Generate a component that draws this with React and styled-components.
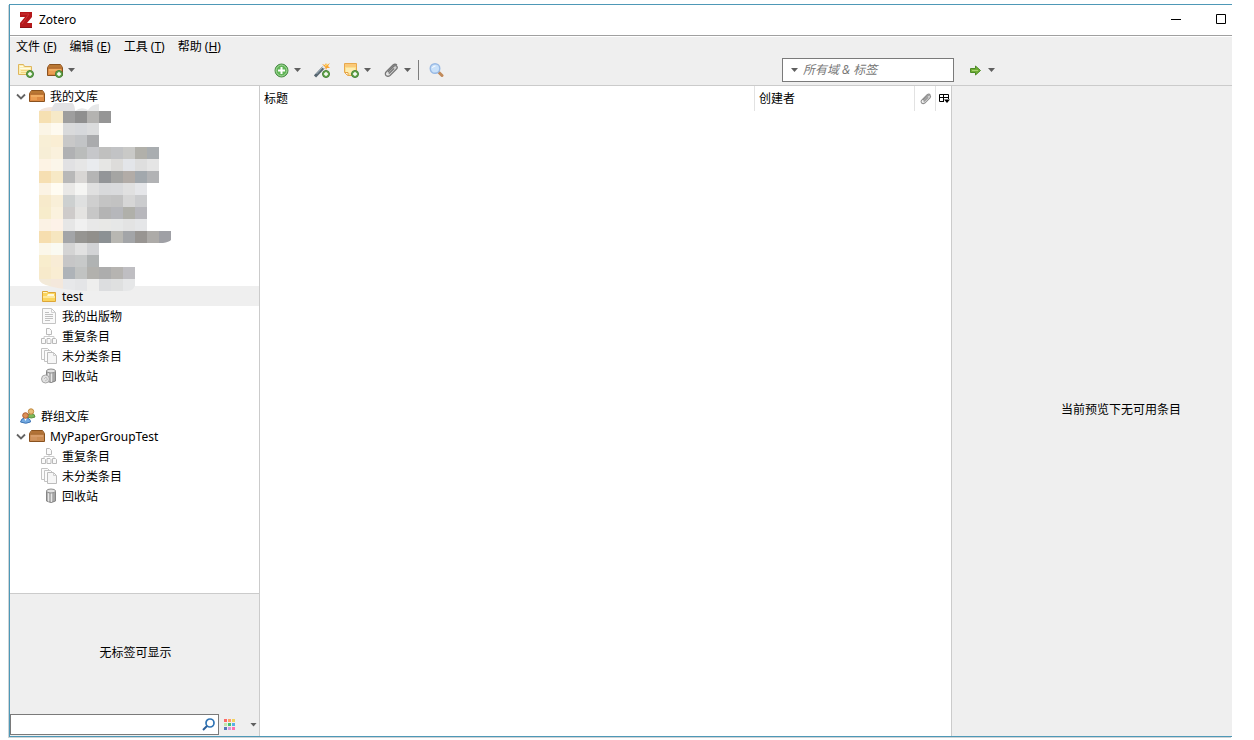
import React, { useState } from 'react';
import styled, { createGlobalStyle } from 'styled-components';


const GlobalStyle = createGlobalStyle`
  * {
    box-sizing: border-box;
  }
  body {
    margin: 0;
    background-color: white;
    color: black;
    font-family: "Noto Sans", "Noto Sans CJK SC", sans-serif;
    font-size: 12px;
    line-height: 20px;
  }
  button, input {
    font: inherit;
    color: inherit;
  }
  svg {
    display: block;
    flex-shrink: 0;
  }
`

const Page = styled.div`
  display: flex;
  min-height: 100vh;
  padding: 4px 22px 3px 9px;
`

const Window = styled.div`
  flex: 1;
  min-width: 0;
  display: flex;
  flex-direction: column;
  background-color: #efefef;
  border: 1px solid #4e98b7;
  border-right: none;
  box-shadow: -1px 1px 0 #cfd3d5;
`

const TitleBar = styled.header`
  display: flex;
  align-items: center;
  height: 31px;
  padding: 0 0 1px 10px;
  background-color: white;
  border-bottom: 1px solid #a0a0a0;
`

const AppTitle = styled.h1`
  flex: 1;
  margin: 0 0 0 7px;
  font-size: 12px;
  font-weight: 400;
`

const WindowButton = styled.button`
  display: flex;
  justify-content: center;
  width: 21px;
  margin-left: 24px;
  padding: 9px 0;
  border: none;
  background: none;
`

const MenuBar = styled.nav`
  display: flex;
  gap: 13px;
  height: 22px;
  padding: 0 6px 1px;
  border-top: 1px solid white;
`

const MenuButton = styled.button`
  padding: 0;
  border: none;
  background: none;
  white-space: nowrap;
`

const Toolbar = styled.div`
  display: flex;
  height: 28px;
  padding-bottom: 3px;
  border-bottom: 1px solid #cbcbcb;
`

const ToolGroup = styled.div`
  display: flex;
  align-items: center;
  gap: ${(props) => props.$gap || 13}px;
  width: ${(props) => props.$width || 'auto'};
  flex: ${(props) => (props.$width ? 'none' : 1)};
  min-width: 0;
  padding-left: ${(props) => props.$left}px;
`

const ToolButton = styled.button`
  display: flex;
  align-items: center;
  gap: ${(props) => props.$gap || 5}px;
  padding: 0;
  border: none;
  background: none;
`

const Caret = styled.span`
  width: 7px;
  height: 4px;
  background-color: #5f5f5f;
  clip-path: polygon(0 0, 100% 0, 50% 100%);
`

const Separator = styled.div`
  width: 1px;
  height: 20px;
  margin: 0 -3px 0 -6px;
  background-color: #7d7d7d;
`

const QuickSearch = styled.label`
  display: flex;
  align-items: center;
  gap: 5px;
  width: 172px;
  height: 24px;
  margin: 0 -2px 0 auto;
  padding: 0 8px;
  border: 1px solid #7a7a7a;
  background-color: white;
`

const QuickSearchInput = styled.input`
  flex: 1;
  min-width: 0;
  padding: 0;
  border: none;
  outline: none;
  background: none;
  &::placeholder {
    color: #777777;
    font-style: italic;
    opacity: 1;
  }
`

const Panes = styled.main`
  flex: 1;
  display: flex;
`

const LeftPane = styled.aside`
  width: 250px;
  display: flex;
  flex-direction: column;
  border-right: 1px solid #cbcbcb;
`

const Tree = styled.div`
  position: relative;
  flex: 1;
  background-color: white;
`

const TreeList = styled.ul`
  margin: 0;
  padding: ${(props) => props.$top || 0}px 0 0;
  list-style: none;
`

const TreeRow = styled.div`
  display: flex;
  align-items: center;
  gap: ${(props) => (props.$level === 1 ? 3 : 5)}px;
  height: 20px;
  padding-left: ${(props) => [10, 6, 31][props.$level]}px;
  background-color: ${(props) => (props.$selected ? '#efefef' : 'transparent')};
`

const TreeLabel = styled.span`
  margin-left: ${(props) => (props.$level === 1 ? 2 : 0)}px;
  padding-top: 2px;
  white-space: nowrap;
`

const HiddenCollections = styled.div`
  height: 180px;
`

/* lies over the rows above and below it */
const Mosaic = styled.svg`
  position: absolute;
  top: 17px;
  left: 29px;
`

const TagPane = styled.section`
  display: flex;
  flex-direction: column;
  height: 143px;
  border-top: 1px solid #cbcbcb;
`

const TagMessage = styled.p`
  flex: 1;
  display: flex;
  align-items: center;
  justify-content: center;
  margin: 0;
  padding: 0 0 2px 2px;
`

const TagFooter = styled.div`
  display: flex;
  align-items: center;
  gap: 5px;
  padding: 0 2px 1px 0;
`

const TagSearch = styled.label`
  flex: 1;
  min-width: 0;
  display: flex;
  align-items: center;
  height: 21px;
  padding: 0 3px;
  border: 1px solid #7a7a7a;
  background-color: white;
`

const TagSearchInput = styled.input`
  flex: 1;
  min-width: 0;
  height: 18px;
  padding: 0;
  border: none;
  outline: none;
  background: none;
`

const TagButton = styled.button`
  display: flex;
  align-items: center;
  gap: 15px;
  padding: 0;
  border: none;
  background: none;
`

const ItemsPane = styled.section`
  flex: 1;
  min-width: 0;
  background-color: white;
  border-right: 1px solid #cbcbcb;
`

const ItemsTable = styled.table`
  width: 100%;
  table-layout: fixed;
  border-collapse: separate;
  border-spacing: 0;
`

const HeadCell = styled.th`
  width: ${(props) => props.$width || 'auto'};
  height: 25px;
  padding: 0 0 0 ${(props) => props.$left || 4}px;
  border-right: ${(props) => (props.$last ? 'none' : '1px solid #e2e2e2')};
  font-weight: 400;
  text-align: left;
`

const ItemPane = styled.aside`
  width: 280px;
  display: flex;
  align-items: center;
  justify-content: center;
  padding: 0 0 2px 58px;
`

const PreviewMessage = styled.p`
  margin: 0;
  white-space: nowrap;
`

function Icon({ children, w = 16, h = 16 }) {
  return (
    <svg width={w} height={h} viewBox={`0 0 ${w} ${h}`} fill="none" aria-hidden="true">
      {children}
    </svg>
  )
}

const PlusBadge = () => (
  <g>
    <circle cx="12" cy="12" r="3.5" fill="#6aaa50" stroke="#417f35" />
    <path d="M12 10v4M10 12h4" stroke="white" strokeWidth="1.4" />
  </g>
)

const Logo = () => (
  <Icon w={12} h={16}>
    <path d="M0 0H12V5L7 11H12V16H0V11L5 5H0Z" fill="#b5181b" />
    <path d="M1 2H9L2 12" stroke="#cf3538" />
    <path d="M0 15.5H12" stroke="#8c1014" />
  </Icon>
)

const NewCollectionIcon = () => (
  <Icon>
    <path d="M.5 12.500V2.500H5.500L6.500 4.500H13.500V12.500Z" fill="#fcefb4" stroke="#dfb65c" />
    <path d="M2 4.500H5M2 6.500H12" stroke="#fffbe6" />
    <path d="M3 8.500H12M3 10.500H9" stroke="#f3d681" />
    <PlusBadge />
  </Icon>
)

const LibraryIcon = ({ plain, plus }) => (
  <Icon>
    <path d="M.5 5.500L2.500 2.500H13.500L15.500 5.500V13.500H.5Z" fill={plain ? '#cb8c53' : '#dd8a42'} stroke="#89521f" strokeLinejoin="round" />
    <path d="M3 3H13L14.500 5.500H1.500Z" fill={plain ? '#b27236' : '#b97732'} />
    <path d="M2 7H14V9H2Z" fill={plain ? '#d79c69' : '#f0ad62'} />
    <path d="M2 9H8V12H2Z" fill={plain ? '#d0935e' : '#eb9e52'} />
    <path d="M1 6H15" stroke="#9c6128" />
    {plus && <PlusBadge />}
  </Icon>
)

const AddIcon = () => (
  <Icon w={15} h={15}>
    <circle cx="7.5" cy="7.500" r="6.500" fill="#61b557" stroke="#4b8c47" />
    <circle cx="7.5" cy="7.500" r="5.400" stroke="#a3d69a" />
    <path d="M7.5 4V11M4 7.500H11" stroke="white" strokeWidth="2" />
  </Icon>
)

const WandIcon = () => (
  <Icon>
    <path d="M1 14.500L10 5" stroke="#56656f" strokeWidth="3" />
    <path d="M2.500 12L9 5" stroke="#a4b6c3" />
    <path d="M9 6L11 4" stroke="#e4e8eb" strokeWidth="3" />
    <path d="M8 2L11 3L12 1L13 3L16 1L14 4L16 6L13 6L12 8L11 5Z" fill="#f9a536" />
    <path d="M11 4L14 2" stroke="#ffe77c" />
    <PlusBadge />
  </Icon>
)

const NoteIcon = () => (
  <Icon>
    <path d="M1.5 1.500H13.500V13.500H4.500L1.500 10.500Z" fill="#fbdf8e" stroke="#e8a84c" />
    <path d="M2 2H13V5H2Z" fill="#fac978" />
    <path d="M3 6H12V11H3Z" fill="#fdedb2" />
    <path d="M2 10.500H5V13" fill="white" stroke="#e5a242" />
    <PlusBadge />
  </Icon>
)

const ClipIcon = ({ small }) => (
  <svg width={small ? 12 : 15} height={small ? 12 : 15} viewBox="0 0 15 15" fill="none" aria-hidden="true">
    <path d="M4 11L12 3.500" stroke="#d0d0d0" strokeWidth="3" />
    <path
      d="M4 9L9.500 3.500Q11 2 12.500 3Q14 4.500 12.500 6L6 12.500Q4 14 2 12.500Q.5 10.500 2.500 8.500L9 2Q11 .5 13 2M5 10.500L10 5.500"
      stroke={small ? '#8f8f8f' : '#777777'}
      strokeWidth="1.300"
    />
  </svg>
)

const MagnifierIcon = () => (
  <Icon w={15} h={15}>
    <path d="M10 9.500L13 12.500" stroke="#c18a5a" strokeWidth="3" strokeLinecap="round" />
    <circle cx="6" cy="5.500" r="4.800" fill="#c9e1fa" stroke="#98b9e4" strokeWidth="1.400" />
    <path d="M3.500 5Q4 3 6.500 3" stroke="white" />
  </Icon>
)

const LocateIcon = () => (
  <Icon w={11} h={11}>
    <path d="M.5 3.500H5.500V1L10.500 5.500L5.500 10V7.500H.5Z" fill="#71ae34" stroke="#4c8a27" />
    <path d="M2 5.500H8" stroke="#a6d372" />
  </Icon>
)

const ChevronIcon = () => (
  <Icon w={10} h={7}>
    <path d="M1 1.500L5 5.500L9 1.500" stroke="#646464" strokeWidth="1.800" />
  </Icon>
)

const FolderIcon = () => (
  <Icon>
    <path d="M1.500 13.500V3.500H6.500L7.500 4.500H14.500V13.500Z" fill="#fbd55f" stroke="#dda637" />
    <path d="M2 4.500H6" stroke="#fff6c8" />
    <path d="M2 8H14V10H2Z" fill="#fde89a" />
    <path d="M7 6H13V8H6Z" fill="#fff9dc" />
  </Icon>
)

const DocumentIcon = () => (
  <Icon>
    <path d="M1.500 .5H10.500L14.500 4.500V15.500H1.500Z" fill="#fafafa" stroke="#c4c4c4" />
    <path d="M10.500 .5V4.500H14.500" stroke="#d0d0d0" />
    <path d="M4 4.500H8M4 6.500H12M4 8.500H12M4 10.500H12M4 12.500H9" stroke="#c0c0c0" />
  </Icon>
)

const DuplicatesIcon = () => (
  <Icon>
    <path d="M8 6V8.500M3 10V8.500H13V10" stroke="#cccccc" />
    <path
      d="M5.500 .5H8.500L10.500 2.500V6.500H5.500ZM.5 10.500H3.500L4.500 11.500V15.500H.5ZM6 10.500H9L10 11.500V15.500H6ZM11.500 10.500H14.500L15.500 11.500V15.500H11.500Z"
      fill="#fafafa"
      stroke="#bababa"
    />
  </Icon>
)

const UnfiledIcon = () => (
  <Icon>
    <path d="M.5 .5H6.500L9.500 3.500V11.500H.5Z" fill="#fbfbfb" stroke="#c4c4c4" />
    <path d="M3.500 2.500H9.500L12.500 5.500V13.500H3.500Z" fill="#fbfbfb" stroke="#c4c4c4" />
    <path d="M6.500 4.500H12.500L15.500 7.500V15.500H6.500Z" fill="#f6f6f6" stroke="#bcbcbc" />
    <path d="M12.500 4.500V7.500H15.500" stroke="#cccccc" />
  </Icon>
)

const TrashIcon = ({ full }) => (
  <Icon>
    <path d="M5.500 3V13Q10 16 14.500 13V3Z" fill="#b4b4b4" stroke="#858585" />
    <path d="M7.500 5V13.500M10.500 5V14" stroke="#e6e6e6" />
    <path d="M13 5V13" stroke="#989898" />
    <ellipse cx="10" cy="3" rx="4.500" ry="2" fill="#e2e2e2" stroke="#8c8c8c" />
    {full && <circle cx="4.500" cy="11" r="4" fill="#e2e2e2" stroke="#a5a5a5" />}
    {full && <path d="M3 11L5 9L6.500 11.500L4 13" stroke="#bdbdbd" />}
  </Icon>
)

const GroupsIcon = () => (
  <Icon>
    <path d="M6.500 9Q7 5.500 11 5.500Q15 5.500 15 9Q12 11 6.500 9Z" fill="#7db85a" stroke="#5d9244" />
    <circle cx="11" cy="3.500" r="2.700" fill="#e9bd79" stroke="#c08a40" />
    <path d="M.5 14Q1 10 5.500 10Q10.500 10 10.500 14Q6 16.500 .5 14Z" fill="#72a9e1" stroke="#4076b5" />
    <path d="M4 10L5.500 13L7 10" fill="white" />
    <circle cx="5.500" cy="7.500" r="2.800" fill="#dc9159" stroke="#b05c30" />
  </Icon>
)

const TagSearchIcon = () => (
  <Icon w={13} h={13}>
    <circle cx="8" cy="5" r="4" stroke="#2f74b5" strokeWidth="1.700" />
    <path d="M5 8L1 12" stroke="#2b5f9a" strokeWidth="2" />
  </Icon>
)

const swatches = ['#ff6666', '#ff9f66', '#f3d15c', '#c5e5ab', '#45c46b', '#58b0e5', '#5577b8', '#d796e0', '#ff70b0']

const SwatchIcon = () => (
  <Icon w={11} h={11}>
    {swatches.map((color, i) => (
      <rect key={color} x={(i % 3) * 4} y={Math.floor(i / 3) * 4} width="3" height="3" fill={color} />
    ))}
  </Icon>
)

const ColumnsIcon = () => (
  <Icon w={11} h={11}>
    <path d="M5 8.500H.5V1.500H9.500V6M0 4.500H10M4.500 1V8" stroke="black" />
    <path d="M5 6.500H11L8 10Z" fill="black" />
  </Icon>
)

const mosaicRows = [
  'f6e0b2 f6e9c8 9e9e9e 8f8f8f b4b3b1 969696',
  'fbf5e6 fefaf0 d9dadb d6d8db dbdcdd',
  'f8efd6 faeed4 c8c8c8 c2c4c6 aaabad',
  'f7eed6 faf1dd b0b1b3 babcbb c6c7ca c0c0bf c2c3c5 c9c9c7 b1b0aa a9adb0',
  'fdf3e4 fbf6ea e1e1e3 e6e6e6 e9ebee e6e6e4 dddcda e3e5e9 dedede e5e5e5',
  'f6dfb2 f7e9c6 b8b8b8 d8d6d4 b5b5b5 939598 a5a5a3 b2aca7 a2a8ad b2b3b5',
  'fbf3e4 fffcf2 e9e8e6 f5f5f3 e0e0e0 d8d9db d9dadc e0e0e0 e5e6e9',
  'f7eacb f9efd8 cdd0d0 dfe0e0 cfcfcf c4c4c4 c2c2c2 d6d6d6 cbccce',
  'f7eccb fbf2de cecbca e4e3e1 c7c7c7 b4b4b4 b6b7bb b0b0aa b7b7bc',
  'fbf2e4 fdf2e8 e6e6e6 f0f0f0 e8e8e8 e8e8e6 e6e7e7 e3e3e3 e5e6e8',
  'f6deaf f6e6c0 a3a5a8 969592 918f8b 8c9194 b8b7b2 a3a5a8 989592 adaba8 9fa0a5',
  'fbf7ea fafaf2 d4d4d4 e1e1e1 d2d3d5',
  'f8edcd f8ecd6 c6c6c7 c7c9c9 b0b3b3',
  'f7eacb f9edd3 aeb3b8 c1c3c2 b2b1ad adadad b6b4b1 bfbec2',
  'f3ead9 f4e8dc e7e8ea e4e5e7 eeeeed dcdddf dfe0e0 e6e7e8',
]

function CollectionMosaic() {
  return (
    <Mosaic width="134" height="188" viewBox="0 0 134 188" aria-hidden="true">
      <defs>
        <clipPath id="blob">
          <path d="M0 8H132V137Q130 139 124 140H97V176Q97 188 88 188H48Q0 185 0 176Z" />
        </clipPath>
      </defs>
      <path d="M0 8Q4 4 14 4V8Z" fill="#f3e6dd" />
      <path d="M12 8Q14 -3 25 -3Q36 -3 36 8Z" fill="#e2e2e4" />
      <path d="M36 8Q42 3 49 7Q53 1 60 1V8Z" fill="#e7e8e9" />
      <g clipPath="url(#blob)">
        {mosaicRows.map((row, y) =>
          row.split(' ').map((color, x) => (
            <rect key={`${x}-${y}`} x={x * 12} y={8 + y * 12} width="12" height="12" fill={`#${color}`} />
          ))
        )}
      </g>
    </Mosaic>
  )
}

const menus = [
  ['文件', 'F'],
  ['编辑', 'E'],
  ['工具', 'T'],
  ['帮助', 'H'],
]

const libraryItems = [
  { id: 'test', label: 'test', icon: <FolderIcon /> },
  { id: 'publications', label: '我的出版物', icon: <DocumentIcon /> },
  { id: 'duplicates', label: '重复条目', icon: <DuplicatesIcon /> },
  { id: 'unfiled', label: '未分类条目', icon: <UnfiledIcon /> },
  { id: 'trash', label: '回收站', icon: <TrashIcon full /> },
]

const groupItems = [
  { id: 'group-duplicates', label: '重复条目', icon: <DuplicatesIcon /> },
  { id: 'group-unfiled', label: '未分类条目', icon: <UnfiledIcon /> },
  { id: 'group-trash', label: '回收站', icon: <TrashIcon /> },
]

function App() {
  const [selected, setSelected] = useState('test');
  const [search, setSearch] = useState('');
  const [tag, setTag] = useState('');

  const renderItem = (item) => (
    <li key={item.id}>
      <TreeRow $level={2} $selected={selected === item.id} onClick={() => setSelected(item.id)}>
        {item.icon}
        <TreeLabel>{item.label}</TreeLabel>
      </TreeRow>
    </li>
  )

  return (
    <Page>
      <GlobalStyle />
      <Window>
        <TitleBar>
          <Logo />
          <AppTitle>Zotero</AppTitle>
          <WindowButton aria-label="最小化">
            <Icon w={11} h={11}><path d="M0 5.500H10" stroke="black" /></Icon>
          </WindowButton>
          <WindowButton aria-label="最大化">
            <Icon w={11} h={11}><path d="M.5 .5H9.500V9.500H.5Z" stroke="black" /></Icon>
          </WindowButton>
        </TitleBar>
        <MenuBar>
          {menus.map(([name, key]) => (
            <MenuButton key={key}>{name} (<u>{key}</u>)</MenuButton>
          ))}
        </MenuBar>
        <Toolbar>
          <ToolGroup $width="250px" $left={8} $gap={13}>
            <ToolButton aria-label="新建分类"><NewCollectionIcon /></ToolButton>
            <ToolButton aria-label="新建文库"><LibraryIcon plus /><Caret /></ToolButton>
          </ToolGroup>
          <ToolGroup $left={14}>
            <ToolButton aria-label="新建条目"><AddIcon /><Caret /></ToolButton>
            <ToolButton aria-label="通过标识符添加"><WandIcon /></ToolButton>
            <ToolButton aria-label="新建笔记"><NoteIcon /><Caret /></ToolButton>
            <ToolButton aria-label="添加附件"><ClipIcon /><Caret /></ToolButton>
            <Separator />
            <ToolButton aria-label="高级搜索"><MagnifierIcon /></ToolButton>
            <QuickSearch>
              <Caret />
              <QuickSearchInput
                type="text"
                aria-label="搜索"
                placeholder="所有域 & 标签"
                value={search}
                onChange={(event) => setSearch(event.target.value)}
              />
            </QuickSearch>
          </ToolGroup>
          <ToolGroup $width="280px" $left={18}>
            <ToolButton $gap={7} aria-label="定位"><LocateIcon /><Caret /></ToolButton>
          </ToolGroup>
        </Toolbar>
        <Panes>
          <LeftPane>
            <Tree>
              <TreeList>
                <li>
                  <TreeRow $level={1}>
                    <ChevronIcon />
                    <LibraryIcon />
                    <TreeLabel $level={1}>我的文库</TreeLabel>
                  </TreeRow>
                  <HiddenCollections />
                  <TreeList>{libraryItems.map(renderItem)}</TreeList>
                </li>
              </TreeList>
              <TreeList $top={20}>
                <li>
                  <TreeRow $level={0}>
                    <GroupsIcon />
                    <TreeLabel>群组文库</TreeLabel>
                  </TreeRow>
                </li>
                <li>
                  <TreeRow $level={1}>
                    <ChevronIcon />
                    <LibraryIcon plain />
                    <TreeLabel $level={1}>MyPaperGroupTest</TreeLabel>
                  </TreeRow>
                  <TreeList>{groupItems.map(renderItem)}</TreeList>
                </li>
              </TreeList>
              <CollectionMosaic />
            </Tree>
            <TagPane>
              <TagMessage>无标签可显示</TagMessage>
              <TagFooter>
                <TagSearch>
                  <TagSearchInput
                    type="text"
                    aria-label="筛选标签"
                    value={tag}
                    onChange={(event) => setTag(event.target.value)}
                  />
                  <TagSearchIcon />
                </TagSearch>
                <TagButton aria-label="标签选项"><SwatchIcon /><Caret /></TagButton>
              </TagFooter>
            </TagPane>
          </LeftPane>
          <ItemsPane>
            <ItemsTable>
              <thead>
                <tr>
                  <HeadCell>标题</HeadCell>
                  <HeadCell $width="160px">创建者</HeadCell>
                  <HeadCell $width="21px" $left={5} aria-label="附件"><ClipIcon small /></HeadCell>
                  <HeadCell $width="15px" $left={3} $last aria-label="选择列"><ColumnsIcon /></HeadCell>
                </tr>
              </thead>
            </ItemsTable>
          </ItemsPane>
          <ItemPane>
            <PreviewMessage>当前预览下无可用条目</PreviewMessage>
          </ItemPane>
        </Panes>
      </Window>
    </Page>
  )
}

export default App
